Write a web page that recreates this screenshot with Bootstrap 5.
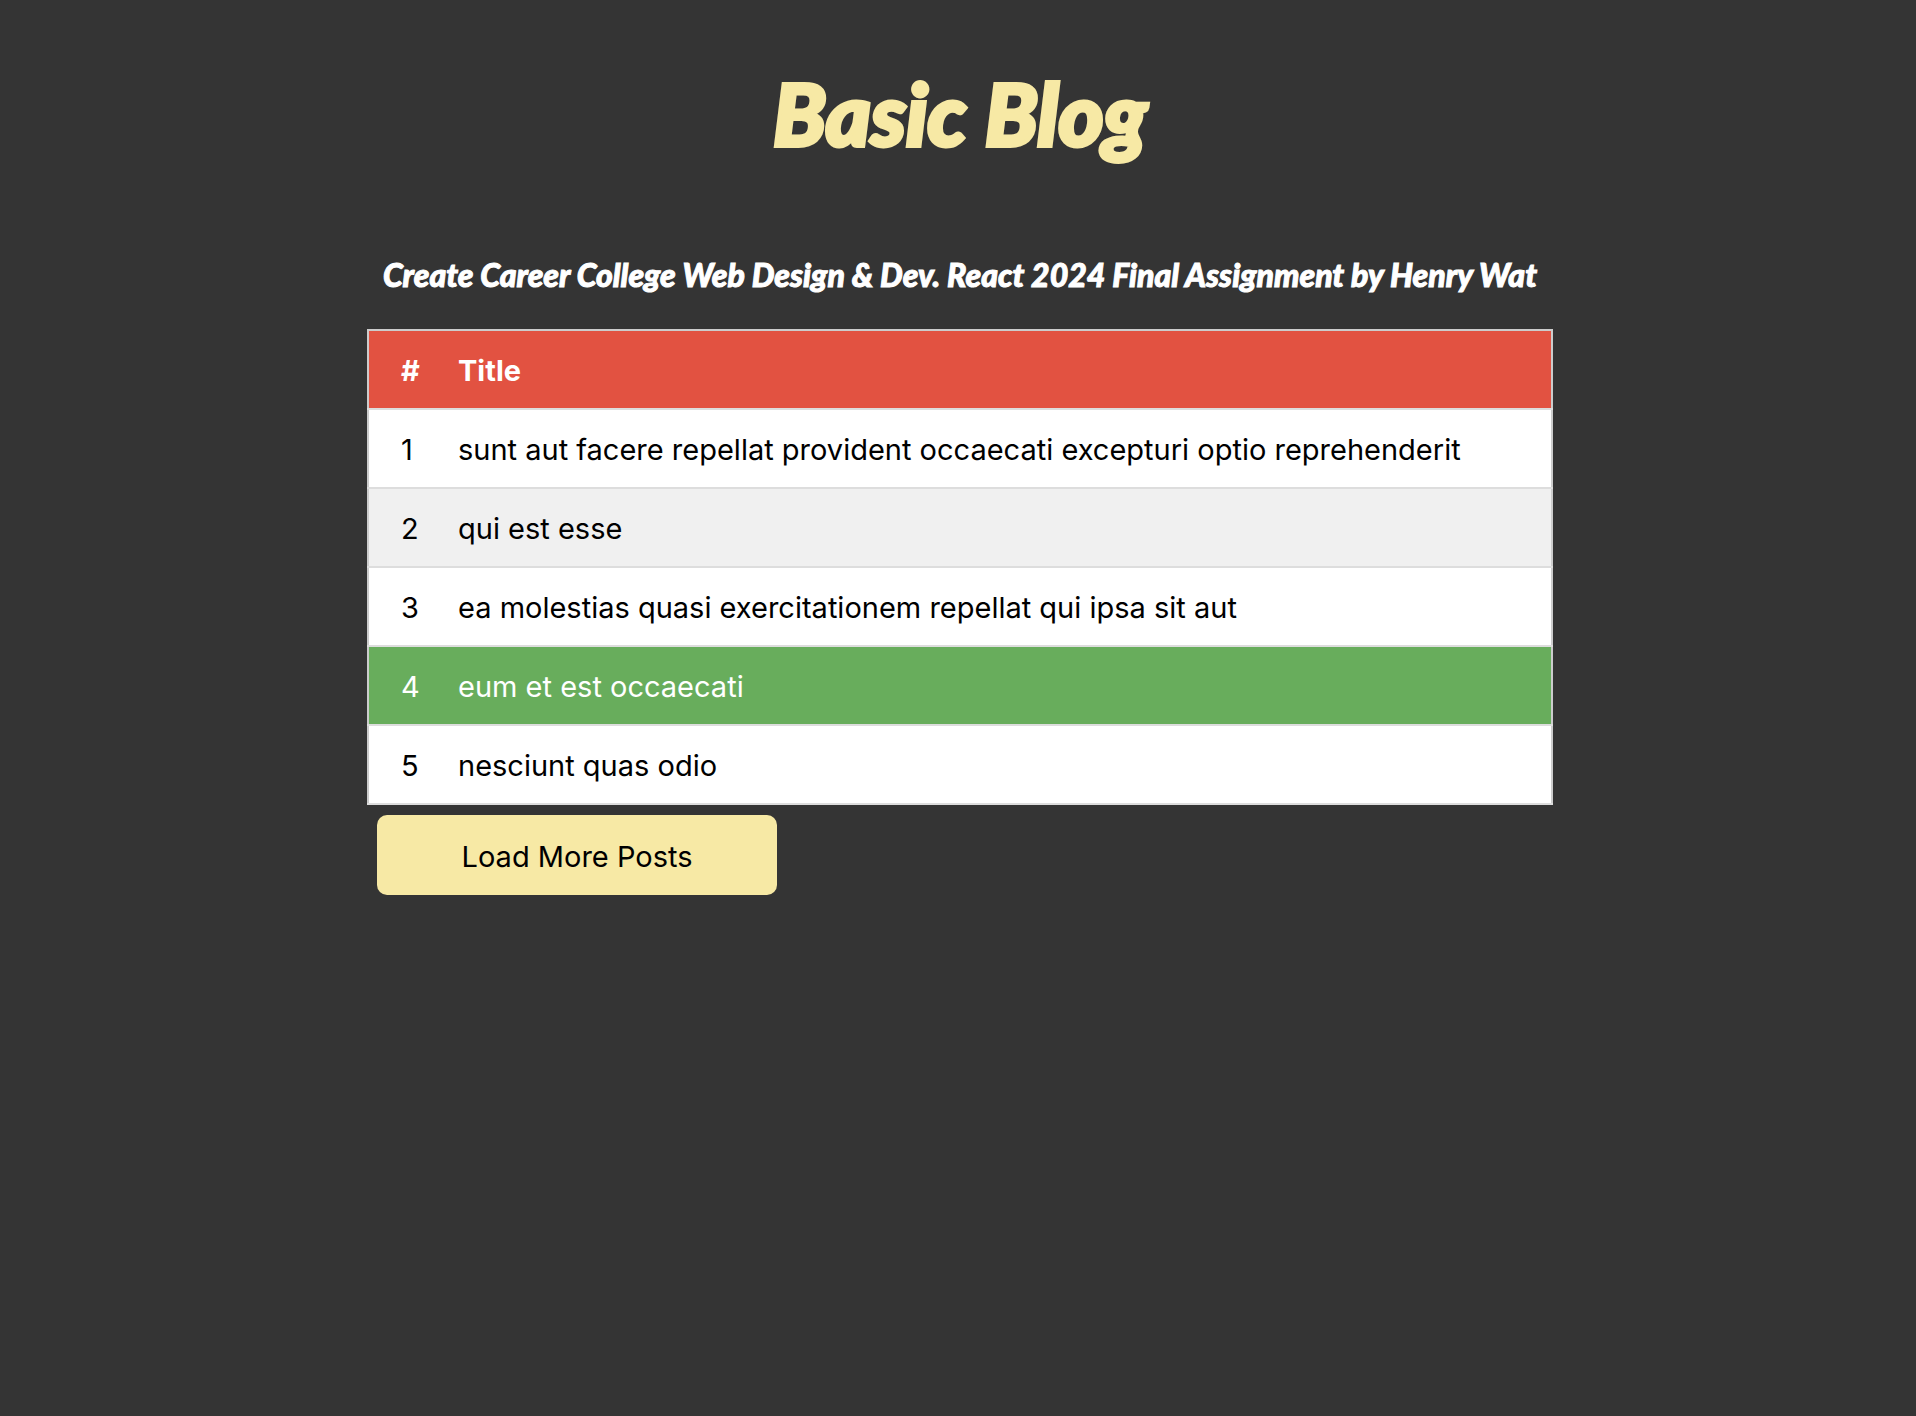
<!DOCTYPE html>
<html lang="en">
<head>
<meta charset="utf-8">
<meta name="viewport" content="width=device-width, initial-scale=1">
<title>Basic Blog</title>
<link href="https://cdn.jsdelivr.net/npm/bootstrap@5.3.0/dist/css/bootstrap.min.css" rel="stylesheet">
<style>
  body { background: #343434; color: #fff; font-family: Inter, Roboto, sans-serif; font-size: 29px; line-height: 37px; }
  .blog-shell { max-width: 1186px; }
  .blog-title, .blog-intro { font-family: Lato, sans-serif; font-weight: 900; font-style: italic; stroke-linejoin: round; }
  .blog-title { color: #f7e9a5; font-size: 86px; line-height: 96px; padding: 65px 0 79px; -webkit-text-stroke: 4px #f7e9a5; }
  .blog-intro { font-size: 32px; line-height: 40px; padding: 15px 0 34px; -webkit-text-stroke: 1px #fff; }
  .post-table { --bs-table-bg: #fff; --bs-table-color: #000; border: 2px solid #ccc; color: #000; }
  .post-table tr { border-bottom: 2px solid #ddd; }
  .post-table > :not(caption) > * > * { padding: 21px 30px 19px 0; border: 0; background: transparent; color: inherit; box-shadow: none; }
  .post-table > :not(caption) > * > :first-child { padding-left: 32px; width: 90px; }
  .post-table tbody tr { background: #fff; cursor: pointer; }
  .post-table tbody tr:nth-child(even) { background: #f0f0f0; }
  .post-table thead tr { background: #e25241; color: #fff; }
  .post-table tbody tr.post-active { background: #68ad5c; color: #fff; }
  .load-more { width: 400px; max-width: 100%; height: 80px; margin: 10px; padding: 10px 12px 6px; border: 0; border-radius: 10px; background: #f7e9a5; color: #000; font-size: 29px; }
  .load-more:hover { background: #efdf90; color: #000; }
</style>
<script src="https://cdn.jsdelivr.net/npm/bootstrap@5.3.0/dist/js/bootstrap.bundle.min.js"></script>
</head>
<body class="ps-1">
<header>
  <h1 class="blog-title text-center m-0">Basic Blog</h1>
</header>
<main class="blog-shell mx-auto">
  <h2 class="blog-intro text-center m-0">Create Career College Web Design &amp; Dev. React 2024 Final Assignment by Henry Wat</h2>
  <table class="table post-table m-0">
    <thead>
      <tr><th scope="col">#</th><th scope="col">Title</th></tr>
    </thead>
    <tbody>
      <tr><td>1</td><td>sunt aut facere repellat provident occaecati excepturi optio reprehenderit</td></tr>
      <tr><td>2</td><td>qui est esse</td></tr>
      <tr><td>3</td><td>ea molestias quasi exercitationem repellat qui ipsa sit aut</td></tr>
      <tr class="post-active"><td>4</td><td>eum et est occaecati</td></tr>
      <tr><td>5</td><td>nesciunt quas odio</td></tr>
    </tbody>
  </table>
  <button type="button" class="btn load-more">Load More Posts</button>
</main>
</body>
</html>
